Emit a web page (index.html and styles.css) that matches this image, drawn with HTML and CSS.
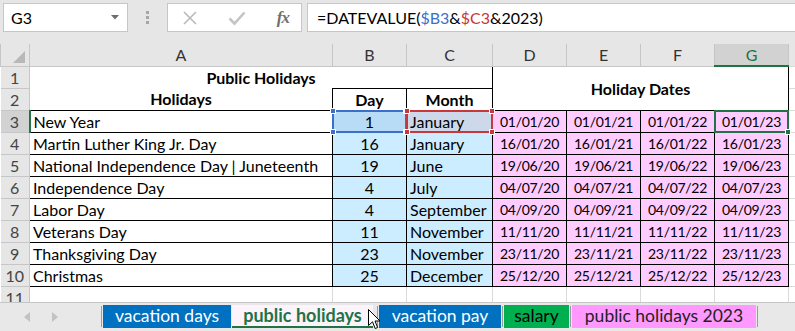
FILE: index.html
```html
<!DOCTYPE html>
<html lang="en">
<head>
	<meta charset="UTF-8">
	<title>public holidays</title>
	<link rel="stylesheet" href="styles.css">
</head>
<body>
<div class="app">
	<!-- formula bar -->
	<div class="formula-bar">
		<div class="name-box">
			<span>G3</span>
			<svg class="caret" width="8" height="5" viewBox="0 0 8 5"><polygon points="0,0 8,0 4,4.5" fill="#6e6e6e"/></svg>
		</div>
		<div class="grip"><i></i><i></i><i></i></div>
		<div class="fx-box">
			<svg width="16" height="16" viewBox="0 0 16 16"><path d="M2 2 L14 14 M14 2 L2 14" stroke="#b9b9b9" stroke-width="1.6" fill="none"/></svg>
			<svg width="18" height="16" viewBox="0 0 18 16"><path d="M1.5 8.5 L6.5 13.5 L16.5 2.5" stroke="#c4c4c4" stroke-width="2.6" fill="none"/></svg>
			<span class="fx">fx</span>
		</div>
		<div class="formula-input">=DATEVALUE(<span class="ref-b">$B3</span>&amp;<span class="ref-c">$C3</span>&amp;2023)</div>
	</div>

	<!-- grid -->
	<div class="sheet-wrap">
		<table class="sheet">
			<colgroup>
				<col style="width:29px">
				<col style="width:303px">
				<col style="width:74px">
				<col style="width:86px">
				<col style="width:74px">
				<col style="width:74px">
				<col style="width:74px">
				<col style="width:74px">
				<col style="width:7px">
			</colgroup>
			<tr class="col-heads">
				<th class="corner"><svg width="14" height="14" viewBox="0 0 14 14"><polygon points="13,1 13,13 1,13" fill="#b8b8b8"/></svg></th>
				<th>A</th><th>B</th><th>C</th><th>D</th><th>E</th><th>F</th><th class="on">G</th><th class="rest"></th>
			</tr>
			<tr>
				<th class="rh">1</th>
				<td colspan="3" class="title">Public Holidays</td>
				<td colspan="4" rowspan="2" class="title bx">Holiday Dates</td>
				<td></td>
			</tr>
			<tr>
				<th class="rh">2</th>
				<td class="title a2">Holidays</td>
				<td class="title bx">Day</td>
				<td class="title bx">Month</td>
				<td></td>
			</tr>
			<tr>
				<th class="rh on">3</th>
				<td class="bx name">New Year</td>
				<td class="bx day sel-b">1<div class="sel blue"><b class="h tl"></b><b class="h tr"></b><b class="h bl"></b><b class="h br"></b></div></td>
				<td class="bx month sel-c">January<div class="sel red"><b class="h tl"></b><b class="h tr"></b><b class="h bl"></b><b class="h br"></b></div></td>
				<td class="bx date">01/01/20</td>
				<td class="bx date">01/01/21</td>
				<td class="bx date">01/01/22</td>
				<td class="bx date cur">01/01/23<div class="active"><b class="fill"></b></div></td>
				<td></td>
			</tr>
			<tr>
				<th class="rh">4</th>
				<td class="bx name">Martin Luther King Jr. Day</td>
				<td class="bx day">16</td>
				<td class="bx month">January</td>
				<td class="bx date">16/01/20</td>
				<td class="bx date">16/01/21</td>
				<td class="bx date">16/01/22</td>
				<td class="bx date">16/01/23</td>
				<td></td>
			</tr>
			<tr>
				<th class="rh">5</th>
				<td class="bx name">National Independence Day | Juneteenth</td>
				<td class="bx day">19</td>
				<td class="bx month">June</td>
				<td class="bx date">19/06/20</td>
				<td class="bx date">19/06/21</td>
				<td class="bx date">19/06/22</td>
				<td class="bx date">19/06/23</td>
				<td></td>
			</tr>
			<tr>
				<th class="rh">6</th>
				<td class="bx name">Independence Day</td>
				<td class="bx day">4</td>
				<td class="bx month">July</td>
				<td class="bx date">04/07/20</td>
				<td class="bx date">04/07/21</td>
				<td class="bx date">04/07/22</td>
				<td class="bx date">04/07/23</td>
				<td></td>
			</tr>
			<tr>
				<th class="rh">7</th>
				<td class="bx name">Labor Day</td>
				<td class="bx day">4</td>
				<td class="bx month">September</td>
				<td class="bx date">04/09/20</td>
				<td class="bx date">04/09/21</td>
				<td class="bx date">04/09/22</td>
				<td class="bx date">04/09/23</td>
				<td></td>
			</tr>
			<tr>
				<th class="rh">8</th>
				<td class="bx name">Veterans Day</td>
				<td class="bx day">11</td>
				<td class="bx month">November</td>
				<td class="bx date">11/11/20</td>
				<td class="bx date">11/11/21</td>
				<td class="bx date">11/11/22</td>
				<td class="bx date">11/11/23</td>
				<td></td>
			</tr>
			<tr>
				<th class="rh">9</th>
				<td class="bx name">Thanksgiving Day</td>
				<td class="bx day">23</td>
				<td class="bx month">November</td>
				<td class="bx date">23/11/20</td>
				<td class="bx date">23/11/21</td>
				<td class="bx date">23/11/22</td>
				<td class="bx date">23/11/23</td>
				<td></td>
			</tr>
			<tr>
				<th class="rh">10</th>
				<td class="bx name">Christmas</td>
				<td class="bx day">25</td>
				<td class="bx month">December</td>
				<td class="bx date">25/12/20</td>
				<td class="bx date">25/12/21</td>
				<td class="bx date">25/12/22</td>
				<td class="bx date">25/12/23</td>
				<td></td>
			</tr>
			<tr>
				<th class="rh">11</th>
				<td></td><td></td><td></td><td></td><td></td><td></td><td></td><td></td>
			</tr>
		</table>
	</div>

	<!-- sheet tabs -->
	<div class="tabs">
		<div class="nav">
			<svg width="8" height="10" viewBox="0 0 8 10"><polygon points="7,0 7,10 1,5" fill="#c2c2c2"/></svg>
			<svg width="8" height="10" viewBox="0 0 8 10"><polygon points="1,0 1,10 7,5" fill="#c2c2c2"/></svg>
		</div>
		<span class="sep"></span>
		<div class="tab blue t-vac">vacation days</div>
		<div class="tab current t-pub">public holidays</div>
		<span class="sep"></span>
		<div class="tab blue t-pay">vacation pay</div>
		<span class="sep"></span>
		<div class="tab green t-sal">salary</div>
		<span class="sep"></span>
		<div class="tab pink t-pub23">public holidays 2023</div>
		<span class="sep"></span>
		<svg class="cursor" width="13" height="21" viewBox="0 0 13 21"><path d="M0.5 0.5 L0.5 16.5 L4.5 12.8 L7.2 19.5 L9.6 18.5 L7 12 L12 12 Z" fill="#fff" stroke="#000" stroke-width="1"/></svg>
	</div>
</div>
</body>
</html>
```

FILE: styles.css
```css
*{
	box-sizing: border-box;
}
body{
	margin: 0;
	width: 795px;
	height: 331px;
	overflow: hidden;
	font-family: Lato, "Liberation Sans", sans-serif;
	color: #000;
	background: #fff;
}
.app{
	display: flex;
	flex-direction: column;
	height: 331px;
}

/* formula bar */
.formula-bar{
	height: 44px;
	flex: none;
	display: flex;
	align-items: flex-start;
	padding: 3px 0 0 3px;
	background: #e6e6e6;
}
.name-box,
.fx-box,
.formula-input{
	height: 29px;
	background: #fff;
	border: 1px solid #c6c6c6;
	display: flex;
	align-items: center;
	font-size: 16px;
}
.name-box{
	width: 125px;
	padding: 0 8px 0 7px;
	justify-content: space-between;
}
.grip{
	width: 39px;
	height: 29px;
	display: flex;
	flex-direction: column;
	align-items: center;
	justify-content: center;
	gap: 2px;
}
.grip i{
	width: 3px;
	height: 3px;
	background: #a6a6a6;
}
.fx-box{
	width: 135px;
	padding: 0 12px 0 14px;
	justify-content: space-between;
}
.fx{
	font-family: "Liberation Serif", serif;
	font-style: italic;
	font-weight: bold;
	font-size: 17px;
	color: #707070;
	letter-spacing: -1px;
}
.formula-input{
	flex: 1;
	margin-left: 5px;
	border-right: none;
	padding-left: 9px;
	padding-bottom: 1px;
}
.ref-b{ color: #3b6fc9; }
.ref-c{ color: #c8373a; }

/* sheet */
.sheet-wrap{
	height: 258px;
	flex: none;
	overflow: hidden;
}
.sheet{
	border-collapse: collapse;
	table-layout: fixed;
	width: 795px;
	font-size: 16px;
}
.sheet tr{
	height: 22px;
}
.sheet td{
	border: 1px solid #dadada;
	padding: 1px 3px 0;
	white-space: nowrap;
	overflow: visible;
	height: 22px;
	line-height: 20px;
}
.sheet th{
	background: #e6e6e6;
	font-weight: normal;
	font-size: 16px;
	color: #333;
	border: 1px solid #c6c6c6;
	padding: 0;
	height: 22px;
	line-height: 20px;
}
.col-heads th{
	border-top: none;
}
.col-heads th.rest{
	border: none;
	background: #e6e6e6;
}
.corner{
	text-align: right;
	vertical-align: bottom;
}
.corner svg{
	display: block;
	margin: 0 3px 2px auto;
}
.sheet th.on{
	background: #d2d2d2;
	color: #217346;
}
.col-heads th.on{
	border-bottom: 2px solid #217346;
}
.sheet th.rh{
	color: #444;
	border-left: none;
	padding-top: 1px;
}
.sheet th.rh.on{
	border-right: 2px solid #217346;
}

.sheet td.title{
	font-weight: bold;
	text-align: center;
	border: none;
}
.sheet td.title.bx,
.sheet td.bx{
	border: 1px solid #000;
}
.sheet td.a2{
	border-bottom: 1px solid #000;
	border-right: 1px solid #000;
}
.name{
	padding-left: 4px;
}
.day{
	background: #ccecff;
	text-align: center;
}
.month{
	background: #ccecff;
}
.date{
	background: #ffccff;
	text-align: center;
	font-size: 14px;
	letter-spacing: -0.3px;
}

/* reference highlights and active cell */
.sheet td.sel-b,
.sheet td.sel-c,
.sheet td.cur{
	position: relative;
}
.sheet td.sel-b{ background: #b9dcf6; }
.sheet td.sel-c{ background: #cdd9ea; }
.sel{
	position: absolute;
	top: -1px;
	left: -1px;
	right: -1px;
	bottom: -1px;
	border: 2px solid;
}
.sel.blue{ border-color: #3b6fc9; }
.sel.red{ border-color: #c8373a; }
.h{
	position: absolute;
	width: 6px;
	height: 6px;
	border: 1px solid #fff;
}
.blue .h{ background: #3b6fc9; }
.red .h{ background: #c8373a; }
.h.tl{ top: -4px; left: -4px; }
.h.tr{ top: -4px; right: -4px; }
.h.bl{ bottom: -4px; left: -4px; }
.h.br{ bottom: -4px; right: -4px; }
.active{
	position: absolute;
	top: -1px;
	left: -1px;
	right: -1px;
	bottom: -1px;
	border: 2px solid #217346;
}
.fill{
	position: absolute;
	right: -4px;
	bottom: -4px;
	width: 6px;
	height: 6px;
	background: #217346;
	border: 1px solid #fff;
}

/* tabs */
.tabs{
	position: relative;
	flex: 1;
	display: flex;
	align-items: flex-start;
	padding-top: 2px;
	background: #e8e8e8;
	border-top: 1px solid #c6c6c6;
	font-size: 17.5px;
}
.nav{
	width: 100px;
	height: 23px;
	display: flex;
	align-items: center;
	gap: 20px;
	padding-left: 23px;
}
.sep{
	width: 1px;
	height: 21px;
	margin: 1px 1px 0;
	background: #9c9c9c;
}
.tab{
	height: 23px;
	line-height: 21px;
	text-align: center;
	white-space: nowrap;
}
.tab.blue{
	background: #0070c0;
	color: #fff;
}
.tab.green{
	background: #00b050;
	color: #000;
}
.tab.pink{
	background: #ff99ff;
	color: #222;
}
.tab.current{
	background: #fdf3fb;
	color: #217346;
	font-weight: bold;
	font-size: 18px;
	border-bottom: 2px solid #217346;
	margin-left: 1px;
}
.t-vac{ width: 128px; }
.t-pub{ width: 141px; margin-right: 3px; }
.t-pay{ width: 122px; }
.t-sal{ width: 65px; }
.t-pub23{ width: 184px; }
.cursor{
	position: absolute;
	left: 368px;
	top: 6px;
}
```
